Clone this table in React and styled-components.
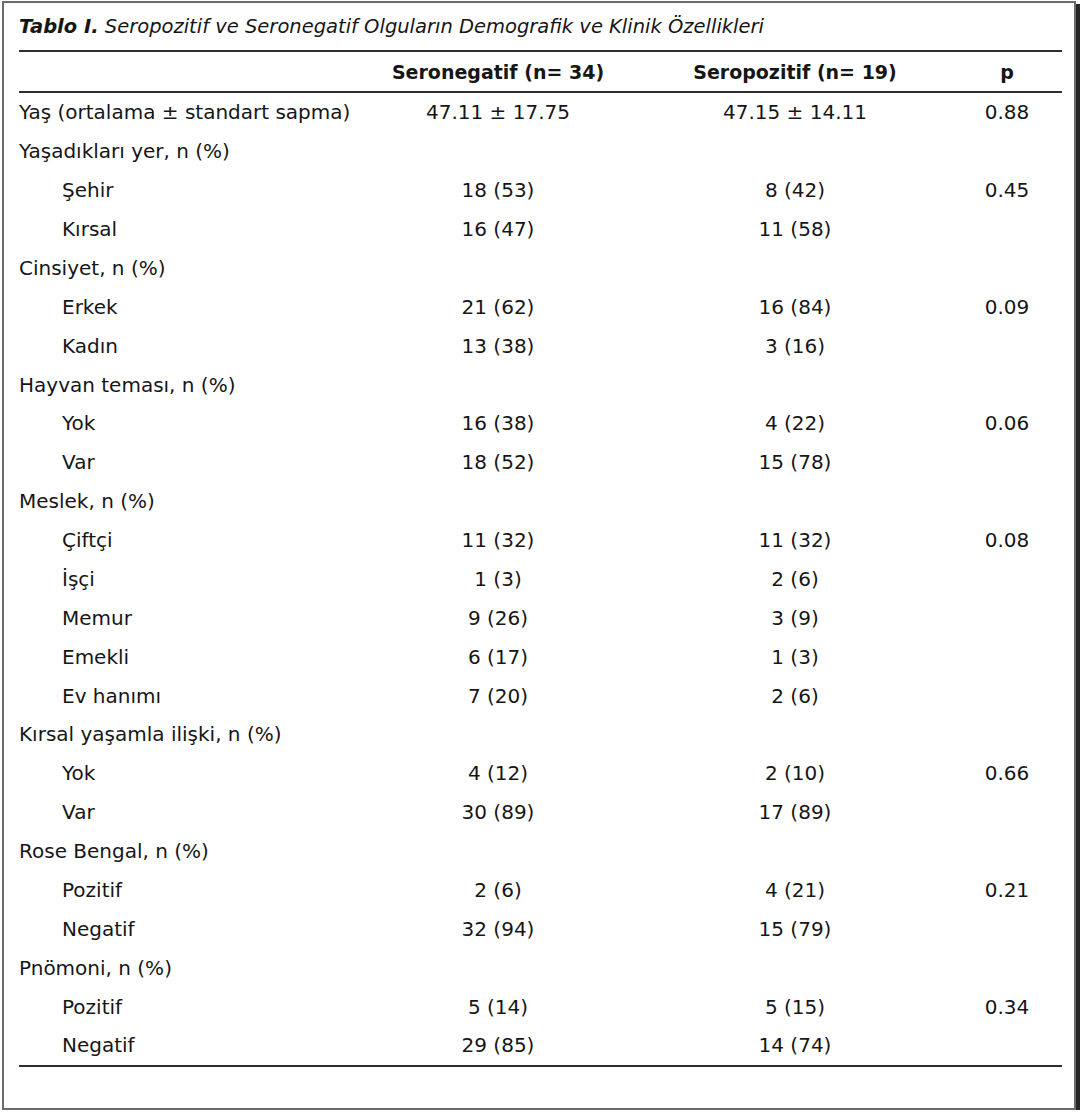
import React from 'react';
import styled, { createGlobalStyle } from 'styled-components';

const GlobalStyle = createGlobalStyle`
  html, body {
    margin: 0;
    padding: 0;
    background: #fff;
  }
  body {
    font-family: "DejaVu Sans", "Open Sans", sans-serif;
    color: #161616;
  }
`;

const Frame = styled.div`
  box-sizing: border-box;
  margin: 1px 0 0 2px;
  width: 1074px;
  height: 1109px;
  border: 2px solid #6b6b6b;
  box-shadow: 4px 3px 0 #262626;
  padding: 0 12px 0 15px;
`;

const Caption = styled.div`
  height: 47px;
  display: flex;
  align-items: center;
  font-size: 19.5px;
  font-style: italic;
  border-bottom: 2px solid #2e2e2e;

  b {
    font-weight: 700;
  }
`;

const Grid = styled.div`
  display: grid;
  grid-template-columns: 339px 280px 314px 110px;
  align-items: center;
`;

const HeadRow = styled(Grid)`
  height: 39px;
  border-bottom: 2px solid #2e2e2e;
  font-weight: 700;
  font-size: 19px;
`;

const Row = styled(Grid)`
  height: 38.875px;
  font-size: 20px;
`;

const Body = styled.div`
  border-bottom: 2px solid #2e2e2e;
`;

const Label = styled.div`
  padding-left: ${p => (p.$sub ? '43px' : '0')};
  white-space: nowrap;
`;

const Cell = styled.div`
  text-align: center;
  white-space: nowrap;
`;

const rows = [
  { label: 'Yaş (ortalama ± standart sapma)', a: '47.11 ± 17.75', b: '47.15 ± 14.11', p: '0.88' },
  { label: 'Yaşadıkları yer, n (%)' },
  { label: 'Şehir', sub: true, a: '18 (53)', b: '8 (42)', p: '0.45' },
  { label: 'Kırsal', sub: true, a: '16 (47)', b: '11 (58)' },
  { label: 'Cinsiyet, n (%)' },
  { label: 'Erkek', sub: true, a: '21 (62)', b: '16 (84)', p: '0.09' },
  { label: 'Kadın', sub: true, a: '13 (38)', b: '3 (16)' },
  { label: 'Hayvan teması, n (%)' },
  { label: 'Yok', sub: true, a: '16 (38)', b: '4 (22)', p: '0.06' },
  { label: 'Var', sub: true, a: '18 (52)', b: '15 (78)' },
  { label: 'Meslek, n (%)' },
  { label: 'Çiftçi', sub: true, a: '11 (32)', b: '11 (32)', p: '0.08' },
  { label: 'İşçi', sub: true, a: '1 (3)', b: '2 (6)' },
  { label: 'Memur', sub: true, a: '9 (26)', b: '3 (9)' },
  { label: 'Emekli', sub: true, a: '6 (17)', b: '1 (3)' },
  { label: 'Ev hanımı', sub: true, a: '7 (20)', b: '2 (6)' },
  { label: 'Kırsal yaşamla ilişki, n (%)' },
  { label: 'Yok', sub: true, a: '4 (12)', b: '2 (10)', p: '0.66' },
  { label: 'Var', sub: true, a: '30 (89)', b: '17 (89)' },
  { label: 'Rose Bengal, n (%)' },
  { label: 'Pozitif', sub: true, a: '2 (6)', b: '4 (21)', p: '0.21' },
  { label: 'Negatif', sub: true, a: '32 (94)', b: '15 (79)' },
  { label: 'Pnömoni, n (%)' },
  { label: 'Pozitif', sub: true, a: '5 (14)', b: '5 (15)', p: '0.34' },
  { label: 'Negatif', sub: true, a: '29 (85)', b: '14 (74)' },
];

export default function App() {
  return (
    <>
      <GlobalStyle />
      <Frame>
        <Caption>
          <span><b>Tablo I.</b> Seropozitif ve Seronegatif Olguların Demografik ve Klinik Özellikleri</span>
        </Caption>
        <HeadRow>
          <Label />
          <Cell>Seronegatif (n= 34)</Cell>
          <Cell>Seropozitif (n= 19)</Cell>
          <Cell>p</Cell>
        </HeadRow>
        <Body>
          {rows.map((r, i) => (
            <Row key={i}>
              <Label $sub={r.sub}>{r.label}</Label>
              <Cell>{r.a}</Cell>
              <Cell>{r.b}</Cell>
              <Cell>{r.p}</Cell>
            </Row>
          ))}
        </Body>
      </Frame>
    </>
  );
}
